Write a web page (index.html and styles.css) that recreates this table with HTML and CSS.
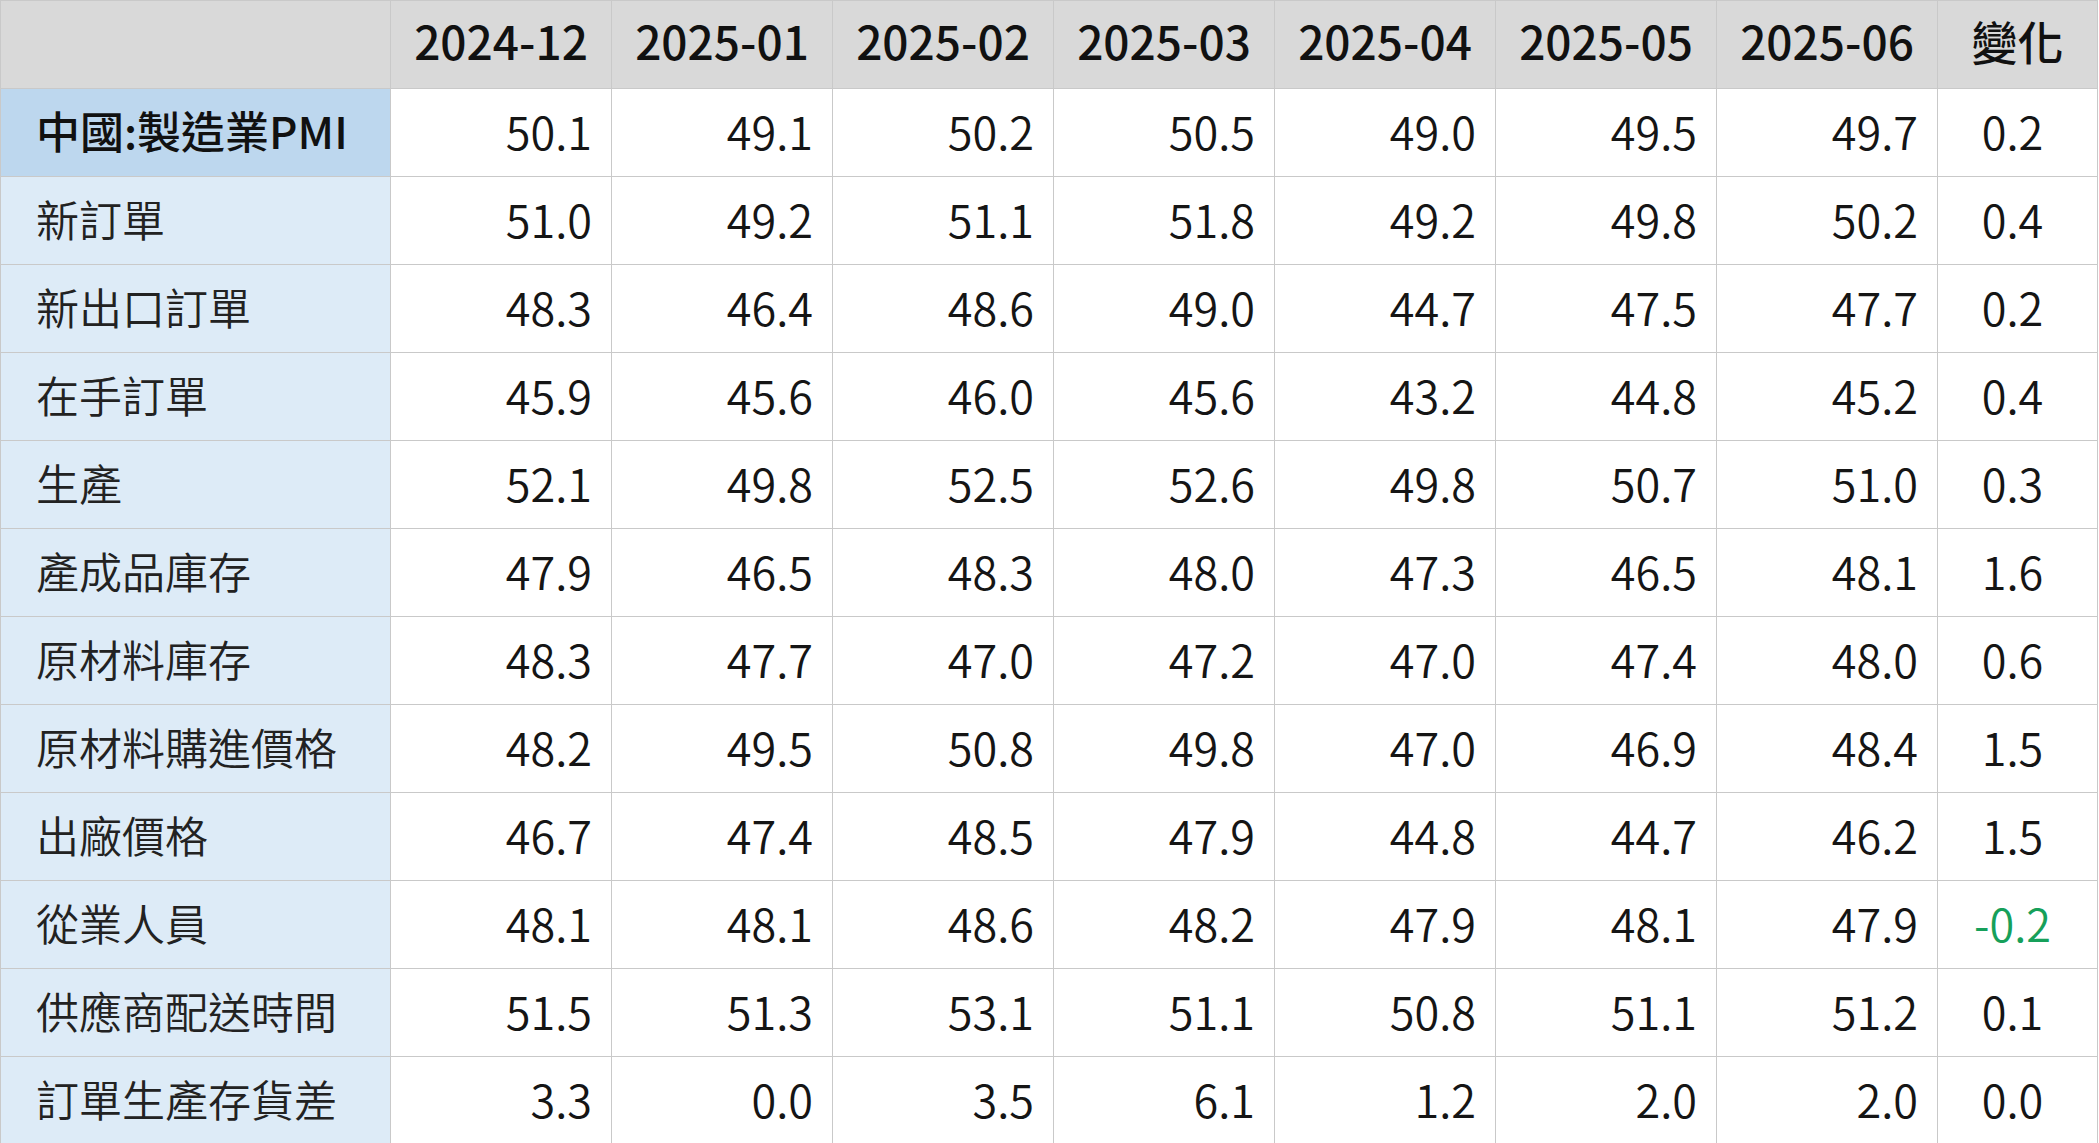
FILE: index.html
```html
<!DOCTYPE html>
<html lang="zh-Hant">
<head>
<meta charset="utf-8">
<title>中國製造業PMI</title>
<link rel="stylesheet" href="styles.css">
</head>
<body>
<table class="pmi">
  <colgroup>
    <col class="c-label"><col class="c-month"><col class="c-month"><col class="c-month"><col class="c-month"><col class="c-month"><col class="c-month"><col class="c-month"><col class="c-chg">
  </colgroup>
  <thead>
    <tr class="head">
      <th class="corner"></th>
      <th>2024-12</th><th>2025-01</th><th>2025-02</th><th>2025-03</th><th>2025-04</th><th>2025-05</th><th>2025-06</th><th>變化</th>
    </tr>
  </thead>
  <tbody>
    <tr class="main"><th class="label">中國:製造業PMI</th><td>50.1</td><td>49.1</td><td>50.2</td><td>50.5</td><td>49.0</td><td>49.5</td><td>49.7</td><td class="chg">0.2</td></tr>
    <tr><th class="label">新訂單</th><td>51.0</td><td>49.2</td><td>51.1</td><td>51.8</td><td>49.2</td><td>49.8</td><td>50.2</td><td class="chg">0.4</td></tr>
    <tr><th class="label">新出口訂單</th><td>48.3</td><td>46.4</td><td>48.6</td><td>49.0</td><td>44.7</td><td>47.5</td><td>47.7</td><td class="chg">0.2</td></tr>
    <tr><th class="label">在手訂單</th><td>45.9</td><td>45.6</td><td>46.0</td><td>45.6</td><td>43.2</td><td>44.8</td><td>45.2</td><td class="chg">0.4</td></tr>
    <tr><th class="label">生產</th><td>52.1</td><td>49.8</td><td>52.5</td><td>52.6</td><td>49.8</td><td>50.7</td><td>51.0</td><td class="chg">0.3</td></tr>
    <tr><th class="label">產成品庫存</th><td>47.9</td><td>46.5</td><td>48.3</td><td>48.0</td><td>47.3</td><td>46.5</td><td>48.1</td><td class="chg">1.6</td></tr>
    <tr><th class="label">原材料庫存</th><td>48.3</td><td>47.7</td><td>47.0</td><td>47.2</td><td>47.0</td><td>47.4</td><td>48.0</td><td class="chg">0.6</td></tr>
    <tr><th class="label">原材料購進價格</th><td>48.2</td><td>49.5</td><td>50.8</td><td>49.8</td><td>47.0</td><td>46.9</td><td>48.4</td><td class="chg">1.5</td></tr>
    <tr><th class="label">出廠價格</th><td>46.7</td><td>47.4</td><td>48.5</td><td>47.9</td><td>44.8</td><td>44.7</td><td>46.2</td><td class="chg">1.5</td></tr>
    <tr><th class="label">從業人員</th><td>48.1</td><td>48.1</td><td>48.6</td><td>48.2</td><td>47.9</td><td>48.1</td><td>47.9</td><td class="chg neg">-0.2</td></tr>
    <tr><th class="label">供應商配送時間</th><td>51.5</td><td>51.3</td><td>53.1</td><td>51.1</td><td>50.8</td><td>51.1</td><td>51.2</td><td class="chg">0.1</td></tr>
    <tr><th class="label">訂單生產存貨差</th><td>3.3</td><td>0.0</td><td>3.5</td><td>6.1</td><td>1.2</td><td>2.0</td><td>2.0</td><td class="chg">0.0</td></tr>
  </tbody>
</table>
</body>
</html>
```

FILE: styles.css
```css
html, body {
  margin: 0;
  padding: 0;
  background: #ffffff;
}

body {
  font-family: "Noto Sans CJK TC", "Noto Sans", sans-serif;
  color: #111111;
  overflow: hidden;
}

.pmi {
  border-collapse: collapse;
  table-layout: fixed;
  width: 2097px;
}

.c-label { width: 390px; }
.c-month { width: 221px; }
.c-chg { width: 160px; }

.pmi th,
.pmi td {
  border: 1px solid #c9c9c9;
  padding: 0 0 5px 0;
  box-sizing: border-box;
  white-space: nowrap;
}

.pmi tr {
  height: 88px;
}

.head th {
  background: #d9d9d9;
  font-size: 46px;
  font-weight: 500;
  text-align: center;
  color: #111111;
  padding-bottom: 9px;
}

.pmi td {
  font-size: 45px;
  font-weight: 350;
  text-align: right;
  padding-right: 19px;
  color: #151515;
}

.pmi td.chg {
  text-align: center;
  padding-right: 10px;
}

.pmi td.neg {
  color: #16a05a;
}

.label {
  background: #ddebf7;
  font-size: 43px;
  font-weight: 350;
  text-align: left;
  padding-left: 35px !important;
  color: #222222;
}

.main .label {
  background: #bdd7ee;
  font-size: 44px;
  font-weight: 500;
  color: #111111;
}
```
